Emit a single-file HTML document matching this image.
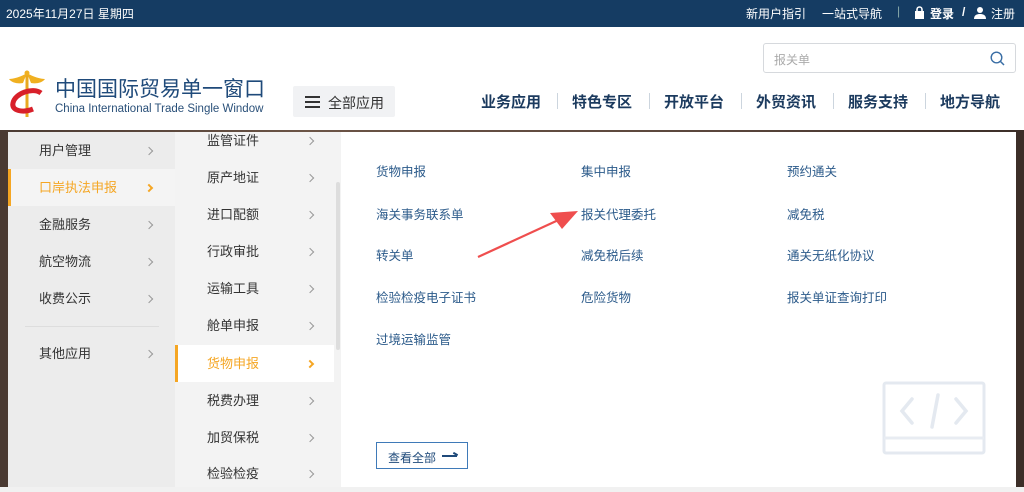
<!DOCTYPE html>
<html><head><meta charset="utf-8"><style>
*{margin:0;padding:0;box-sizing:border-box}
body{width:1024px;height:492px;overflow:hidden;font-family:"Liberation Sans","Noto Sans CJK SC",sans-serif;background:#f0f0f0;position:relative}
.a{position:absolute;white-space:nowrap}
.top{left:0;top:0;width:1024px;height:27px;background:#153c63;color:#fff;font-size:12px}
.hdr{left:0;top:27px;width:1024px;height:103px;background:#fff}
.nav{font-size:15px;font-weight:bold;color:#1b3a5e;top:91px}
.sep{top:93px;width:1px;height:16px;background:#ccd5de}
.bg{left:0;top:130px;width:1024px;height:358px;background:linear-gradient(90deg,#4a3a32,#6b5446 30%,#5a463c 70%,#3c2e28)}
.L{left:8px;top:132px;width:167px;height:355px;background:#ececec}
.M{left:175px;top:132px;width:166px;height:355px;background:#f3f3f3}
.R{left:341px;top:132px;width:675px;height:355px;background:#fff}
.li{font-size:13px;color:#333;width:115px;height:37px;line-height:37px}
.li b{position:absolute;right:2px;top:16px;width:6px;height:6px;border-top:1.3px solid #999;border-right:1.3px solid #999;transform:rotate(45deg)}
.li.on{color:#f5a623}
.li.on b{border-color:#f5a623;border-width:2px}
.lk{font-size:12.5px;color:#2b5a8a}
</style></head><body>
<div class="a top">
 <span class="a" style="left:6px;top:5px">2025年11月27日 星期四</span>
 <span class="a" style="left:746px;top:5px">新用户指引</span>
 <span class="a" style="left:822px;top:5px">一站式导航</span>
 <span class="a" style="left:897px;top:4px;color:#8aa">|</span>
 <svg class="a" style="left:914px;top:6px" width="11" height="13" viewBox="0 0 11 13"><rect x="1" y="5" width="9" height="8" fill="#fff"/><path d="M3 5V3.5a2.5 2.5 0 015 0V5" stroke="#fff" stroke-width="1.6" fill="none"/></svg>
 <span class="a" style="left:930px;top:5px;font-weight:bold">登录</span>
 <span class="a" style="left:962px;top:5px;font-weight:bold">/</span>
 <svg class="a" style="left:974px;top:6px" width="12" height="13" viewBox="0 0 12 13"><circle cx="6" cy="4" r="3" fill="#fff"/><path d="M0 13c0-4 3-5 6-5s6 1 6 5z" fill="#fff"/></svg>
 <span class="a" style="left:991px;top:5px">注册</span>
</div>
<div class="a hdr"></div>
<div class="a" style="left:763px;top:43px;width:253px;height:30px;border:1px solid #d6d9dd;border-radius:3px;background:#fff">
 <span class="a" style="left:10px;top:7px;font-size:12px;color:#aaa">报关单</span>
 <svg class="a" style="left:226px;top:7px" width="15" height="15" viewBox="0 0 15 15"><circle cx="6.5" cy="6.5" r="5.3" stroke="#3a6ea5" stroke-width="1.4" fill="none"/><path d="M10.5 10.5L14 14" stroke="#3a6ea5" stroke-width="1.5"/></svg>
</div>
<svg class="a" style="left:7px;top:69px" width="40" height="50" viewBox="0 0 40 50"><path d="M20 4C14 8 6 10 2 10c3 4 9 5 14 4zM20 4c6 4 14 6 18 6-3 4-9 5-14 4z" fill="#f0b020"/><rect x="18.5" y="3" width="3" height="45" fill="#e8a820"/><path d="M34 24C26 18 8 24 6 34c-2 8 10 10 20 6" stroke="#d8202a" stroke-width="5" fill="none"/><circle cx="20" cy="4" r="2.5" fill="#f0b020"/></svg>
<div class="a" style="left:55px;top:73px;font-size:21px;color:#1f4a7a">中国国际贸易单一窗口</div>
<div class="a" style="left:55px;top:103px;font-size:11.5px;color:#2a5079">China International Trade Single Window</div>
<div class="a" style="left:293px;top:86px;width:102px;height:31px;background:#f1f2f4;border-radius:2px">
 <div class="a" style="left:12px;top:10px;width:15px;height:2px;background:#333;box-shadow:0 5px 0 #333,0 10px 0 #333"></div>
 <span class="a" style="left:35px;top:7px;font-size:14px;color:#333">全部应用</span>
</div>
<span class="a nav" style="left:481px">业务应用</span><div class="a sep" style="left:557px"></div>
<span class="a nav" style="left:572px">特色专区</span><div class="a sep" style="left:649px"></div>
<span class="a nav" style="left:664px">开放平台</span><div class="a sep" style="left:741px"></div>
<span class="a nav" style="left:756px">外贸资讯</span><div class="a sep" style="left:833px"></div>
<span class="a nav" style="left:848px">服务支持</span><div class="a sep" style="left:925px"></div>
<span class="a nav" style="left:940px">地方导航</span>
<div class="a bg"></div>
<div class="a" style="left:0;top:487px;width:1024px;height:5px;background:#f1f1f1"></div>
<div class="a L"></div><div class="a M"></div><div class="a R"></div>
<div class="a" style="left:8px;top:169px;width:167px;height:37px;background:#f4f4f4;border-left:3px solid #f5a623"></div>
<div class="a li" style="left:39px;top:132px">用户管理<b></b></div>
<div class="a li on" style="left:39px;top:169px">口岸执法申报<b></b></div>
<div class="a li" style="left:39px;top:206px">金融服务<b></b></div>
<div class="a li" style="left:39px;top:243px">航空物流<b></b></div>
<div class="a li" style="left:39px;top:280px">收费公示<b></b></div>
<div class="a" style="left:25px;top:326px;width:134px;height:1px;background:#ddd"></div>
<div class="a li" style="left:39px;top:335px">其他应用<b></b></div>
<div class="a" style="left:175px;top:345px;width:159px;height:37px;background:#fff;border-left:3px solid #f5a623"></div>
<div class="a" style="left:336px;top:182px;width:4px;height:168px;background:#ddd;border-radius:2px"></div>
<div class="a li" style="left:207px;top:122px;width:108px">监管证件<b></b></div>
<div class="a li" style="left:207px;top:159px;width:108px">原产地证<b></b></div>
<div class="a li" style="left:207px;top:196px;width:108px">进口配额<b></b></div>
<div class="a li" style="left:207px;top:233px;width:108px">行政审批<b></b></div>
<div class="a li" style="left:207px;top:270px;width:108px">运输工具<b></b></div>
<div class="a li" style="left:207px;top:307px;width:108px">舱单申报<b></b></div>
<div class="a li on" style="left:207px;top:345px;width:108px">货物申报<b></b></div>
<div class="a li" style="left:207px;top:382px;width:108px">税费办理<b></b></div>
<div class="a li" style="left:207px;top:419px;width:108px">加贸保税<b></b></div>
<div class="a li" style="left:207px;top:455px;width:108px">检验检疫<b></b></div>
<span class="a lk" style="left:376px;top:161px">货物申报</span>
<span class="a lk" style="left:581px;top:161px">集中申报</span>
<span class="a lk" style="left:787px;top:161px">预约通关</span>
<span class="a lk" style="left:376px;top:204px">海关事务联系单</span>
<span class="a lk" style="left:581px;top:204px">报关代理委托</span>
<span class="a lk" style="left:787px;top:204px">减免税</span>
<span class="a lk" style="left:376px;top:245px">转关单</span>
<span class="a lk" style="left:581px;top:245px">减免税后续</span>
<span class="a lk" style="left:787px;top:245px">通关无纸化协议</span>
<span class="a lk" style="left:376px;top:287px">检验检疫电子证书</span>
<span class="a lk" style="left:581px;top:287px">危险货物</span>
<span class="a lk" style="left:787px;top:287px">报关单证查询打印</span>
<span class="a lk" style="left:376px;top:329px">过境运输监管</span>
<svg class="a" style="left:470px;top:205px" width="110" height="60" viewBox="0 0 110 60"><path d="M8 52L95 12" stroke="#ef4e4e" stroke-width="2.2"/><path d="M108 6L80 8l12 16z" fill="#ef4e4e"/></svg>
<div class="a" style="left:376px;top:442px;width:92px;height:27px;border:1px solid #3f7ab8">
 <span class="a" style="left:11px;top:6px;font-size:12px;color:#1f4a7a">查看全部</span>
 <div class="a" style="left:65px;top:12px;width:15px;height:2px;background:#1f4a7a"></div>
 <div class="a" style="left:76px;top:10px;width:5px;height:2px;background:#1f4a7a;transform:rotate(30deg)"></div>
</div>
<svg class="a" style="left:882px;top:381px" width="104" height="80" viewBox="0 0 104 80"><rect x="2" y="2" width="100" height="70" rx="2" fill="none" stroke="#e4e9f0" stroke-width="3"/><path d="M2 57h100" stroke="#e8ecf2" stroke-width="3"/><path d="M30 18l-10 12 10 12M74 18l10 12-10 12M56 14l-6 32" stroke="#e4e9f0" stroke-width="3.5" fill="none" stroke-linecap="round"/></svg>
</body></html>
